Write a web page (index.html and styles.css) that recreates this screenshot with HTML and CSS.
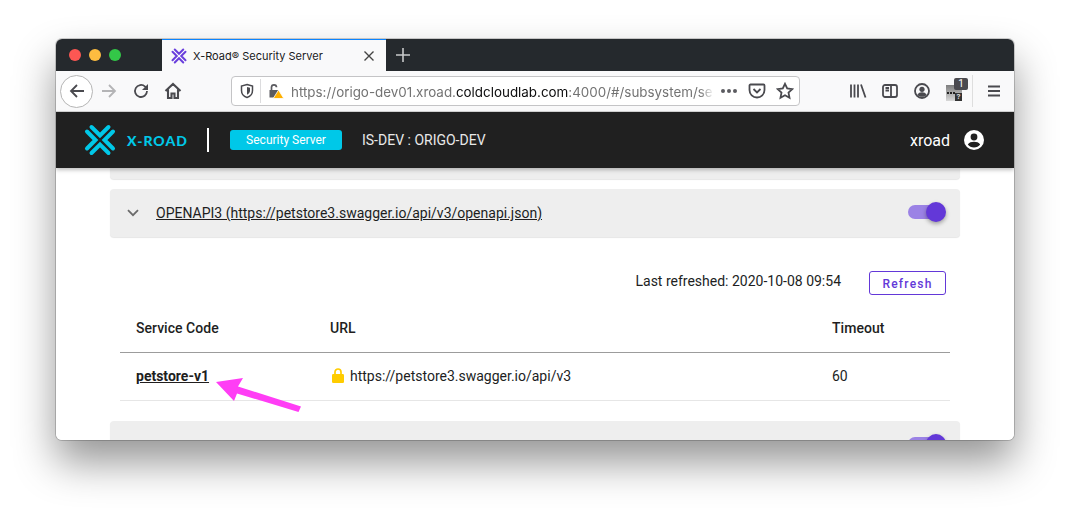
FILE: index.html
```html
<!DOCTYPE html>
<html lang="en">
<head>
<meta charset="utf-8">
<title>X-Road Security Server</title>
<link rel="stylesheet" href="styles.css">
</head>
<body>
<div class="window">
  <div class="titlebar">
    <div class="lights"><span class="light red"></span><span class="light amber"></span><span class="light green"></span></div>
    <div class="tab">
      <svg class="favicon" viewBox="0 0 32 32"><use href="#xlogo"/></svg>
      <span class="tab-title">X-Road® Security Server</span>
      <svg class="tab-close" viewBox="0 0 12 12"><path d="M1.5 1.5l9 9M10.5 1.5l-9 9"/></svg>
    </div>
    <svg class="newtab" viewBox="0 0 16 16"><path d="M8 1v14M1 8h14"/></svg>
  </div>

  <div class="toolbar">
    <div class="back"><svg class="ico" viewBox="0 0 18 18"><path d="M16 9H3M9 3L3 9l6 6"/></svg></div>
    <div class="cell"><svg class="ico faded" viewBox="0 0 18 18"><path d="M2 9h13M9 3l6 6-6 6"/></svg></div>
    <div class="cell"><svg class="ico" viewBox="0 0 18 18"><path d="M15 9a6 6 0 1 1-1.9-4.4L15 6.400"/><path class="solid" d="M16 2v6h-6z"/></svg></div>
    <div class="cell"><svg class="ico heavy" viewBox="0 0 18 18"><path d="M1.500 9L9 2l7.500 7M4 7.500V16h3.500v-4.500h3V16H14V7.500"/></svg></div>
    <div class="urlbar">
      <svg class="ico shield" viewBox="0 0 16 16"><path d="M8 1.500l5.500 1.500v4.500c0 3.500-2.500 6-5.500 7-3-1-5.500-3.500-5.500-7V3z"/><path class="solid" d="M8 4l3 .8v2.700c0 2-1.300 3.500-3 4.200z"/></svg>
      <span class="url-sep"></span>
      <svg class="lock-warn" viewBox="0 0 16 16"><path class="lw-body" d="M1.500 7h9v7.500h-9z"/><path class="lw-shackle" d="M3.500 7V4.300a2.500 2.500 0 0 1 5 0"/><path class="lw-tri" d="M10.500 7l5.300 8.500H5.200z"/></svg>
      <div class="url"><span class="url-dim">https://origo-dev01.xroad.</span><span class="url-host">coldcloudlab.com</span><span class="url-dim">:4000/#/subsystem/se</span></div>
      <span class="dots"><i></i><i></i><i></i></span>
      <svg class="ico pocket" viewBox="0 0 18 18"><path d="M2.500 2.500h13a1 1 0 0 1 1 1V8a7.500 7.500 0 0 1-15 0V3.500a1 1 0 0 1 1-1z"/><path d="M5.500 7L9 10.500 12.500 7"/></svg>
      <svg class="ico star" viewBox="0 0 18 18"><path d="M9 1.800l2.200 4.700 5.100.6-3.800 3.500 1 5.100L9 13.200l-4.500 2.500 1-5.100L1.700 7.100l5.100-.6z"/></svg>
    </div>
    <div class="cell cell-first"><svg class="ico" viewBox="0 0 18 18"><path d="M2 2.500v13M5.500 2.500v13M9 2.500v13M12 2.500l4.500 13"/></svg></div>
    <div class="cell"><svg class="ico" viewBox="0 0 18 18"><rect x="2" y="3" width="14" height="12" rx="2"/><path d="M10 3v12M4.500 6H8M4.500 8.500H8"/></svg></div>
    <div class="cell"><svg class="ico" viewBox="0 0 18 18"><circle cx="9" cy="9" r="7"/><circle class="solid" cx="9" cy="7.300" r="2.600"/><path class="solid" d="M4.300 13c1-2 2.700-2.700 4.700-2.700s3.700.7 4.700 2.700c-1.300 1.200-2.900 1.800-4.700 1.800s-3.400-.6-4.700-1.800z"/></svg></div>
    <div class="cell"><div class="ext"><span class="ext-tile"><i></i><i></i><i></i></span><span class="ext-q">?</span><span class="ext-badge">1</span></div></div>
    <span class="tool-sep"></span>
    <div class="cell cell-menu"><svg class="ico heavy" viewBox="0 0 18 18"><path d="M3 4.500h12M3 9h12M3 13.500h12"/></svg></div>
  </div>

  <header class="appbar">
    <svg class="logo" viewBox="0 0 32 32"><use href="#xlogo"/></svg>
    <span class="wordmark">X-ROAD</span>
    <span class="divider"></span>
    <span class="chip">Security Server</span>
    <span class="instance">IS-DEV : ORIGO-DEV</span>
    <span class="user">xroad</span>
    <svg class="avatar" viewBox="0 0 20 20"><circle class="av-bg" cx="10" cy="10" r="10"/><circle class="av-fg" cx="10" cy="7" r="3.400"/><path class="av-fg" d="M3.800 14.600C5 12.400 7.500 11.700 10 11.700s5 .7 6.200 2.900C14.800 16.600 12.500 17.500 10 17.500s-4.800-.9-6.200-2.900z"/></svg>
  </header>

  <main class="content">
    <div class="panel-stub"></div>
    <section class="panel">
      <svg class="chevron" viewBox="0 0 12 8"><path d="M1 1.200l5 5 5-5"/></svg>
      <a class="panel-link">OPENAPI3 (https://petstore3.swagger.io/api/v3/openapi.json)</a>
      <span class="toggle"><span class="knob"></span></span>
    </section>
    <div class="refresh-row">
      <span class="refreshed">Last refreshed: 2020-10-08 09:54</span>
      <button class="refresh-btn">Refresh</button>
    </div>
    <div class="table">
      <div class="tr th"><span class="c1">Service Code</span><span class="c2">URL</span><span class="c3">Timeout</span></div>
      <div class="tr td">
        <a class="c1 code">petstore-v1</a>
        <span class="c2 urlcell"><svg class="padlock" viewBox="0 0 12 15"><rect class="pl-body" x="0" y="6" width="12" height="9" rx="1.200"/><path class="pl-shackle" d="M3 7V4a3 3 0 0 1 6 0v3"/></svg>https://petstore3.swagger.io/api/v3</span>
        <span class="c3">60</span>
      </div>
    </div>
    <section class="panel panel-last">
      <span class="toggle"><span class="knob"></span></span>
    </section>
  </main>

  <svg class="pointer" viewBox="0 0 100 40"><path d="M1 1L28-3 23 5.500 86 25.500 83.500 31 22 12.500 19 20z"/></svg>
</div>

<svg class="defs" width="0" height="0">
  <defs>
    <g id="xlogo" fill="none" stroke="currentColor" stroke-width="4" stroke-linecap="round" stroke-linejoin="miter">
      <path d="M7.500 3L16 11.500 24.500 3"/>
      <path d="M7.500 29L16 20.500 24.500 29"/>
      <path d="M3 7.500L11.500 16 3 24.500"/>
      <path d="M29 7.500L20.500 16 29 24.500"/>
    </g>
  </defs>
</svg>
</body>
</html>
```

FILE: styles.css
```css
* { box-sizing: border-box; }
html, body { margin: 0; height: 100%; }
body {
  background: #fff;
  padding: 39px 56px 0;
  font-family: Roboto, "Liberation Sans", sans-serif;
  overflow: hidden;
}
.defs { display: block; }

.window {
  position: relative;
  width: 958px;
  height: 401px;
  border-radius: 6px;
  overflow: hidden;
  background: #fff;
  display: flex;
  flex-direction: column;
}
body::before {
  content: "";
  position: absolute;
  left: 56px;
  top: 39px;
  width: 958px;
  height: 401px;
  border-radius: 6px;
  box-shadow: 0 0 0 1px rgba(0,0,0,.18), 0 22px 42px rgba(0,0,0,.42);
}

/* title bar */
.titlebar {
  height: 32px;
  flex: none;
  background: #25292d;
  display: flex;
  align-items: stretch;
}
.lights { width: 106px; display: flex; align-items: center; gap: 8px; padding-left: 13px; }
.light { width: 12px; height: 12px; border-radius: 50%; }
.red { background: #fc5753; }
.amber { background: #fdbc40; }
.green { background: #33c748; }
.tab {
  width: 224px;
  background: #f9f9fa;
  border-top: 1px solid #0a84ff;
  display: flex;
  align-items: center;
  padding-left: 9px;
}
.favicon { width: 16px; height: 16px; color: #6a3fdc; flex: none; }
.tab-title {
  margin-left: 6px;
  font: 400 11px Inter, "Liberation Sans", sans-serif;
  color: #1a1a1a;
  white-space: nowrap;
  flex: 1;
}
.tab-close { width: 12px; height: 12px; margin-right: 11px; fill: none; stroke: #444; stroke-width: 1.400; }
.newtab { width: 16px; height: 16px; align-self: center; margin-left: 9px; fill: none; stroke: #c8c9ca; stroke-width: 1.600; }

/* toolbar */
.toolbar {
  height: 41px;
  flex: none;
  background: #f9f9fa;
  border-bottom: 1px solid #d4d4d4;
  display: flex;
  align-items: center;
  padding-left: 4px;
}
.ico { width: 18px; height: 18px; fill: none; stroke: #4a4a4f; stroke-width: 1.800; flex: none; }
.ico .solid { fill: #4a4a4f; stroke: none; }
.ico.faded { stroke: #b4b4b6; }
.ico.heavy { stroke-width: 2.100; }
.back {
  width: 33px;
  height: 33px;
  border-radius: 50%;
  border: 1px solid #b5b5b5;
  background: #fff;
  display: flex;
  align-items: center;
  justify-content: center;
  flex: none;
}
.cell { width: 32px; height: 32px; display: flex; align-items: center; justify-content: center; flex: none; }
.cell-first { margin-left: 42px; }
.cell-menu { margin-left: 5px; }
.urlbar {
  width: 569px;
  height: 30px;
  margin-left: 42px;
  background: #fff;
  border: 1px solid #c4c4c6;
  border-radius: 4px;
  display: flex;
  align-items: center;
  padding-left: 7px;
  flex: none;
}
.shield { width: 16px; height: 16px; stroke-width: 1.500; }
.url-sep { width: 1px; height: 24px; background: #dcdcde; margin-left: 5px; }
.lock-warn { width: 16px; height: 16px; margin-left: 7px; flex: none; }
.lw-body { fill: #5b5b60; }
.lw-shackle { fill: none; stroke: #5b5b60; stroke-width: 1.700; }
.lw-tri { fill: #ffb000; stroke: #fff; stroke-width: .8; }
.url {
  margin-left: 7px;
  padding-top: 1px;
  width: 421px;
  white-space: nowrap;
  font: 400 13.4px Inter, "Liberation Sans", sans-serif;
  -webkit-mask-image: linear-gradient(to right, #000 97%, rgba(0,0,0,.15));
  mask-image: linear-gradient(to right, #000 97%, rgba(0,0,0,.15));
}
.url-dim { color: #737373; }
.url-host { color: #0c0c0d; }
.dots { display: flex; gap: 2px; margin-left: 9px; }
.dots i { width: 4px; height: 4px; border-radius: 50%; background: #5b5b60; }
.pocket { margin-left: 11px; }
.star { margin-left: 10px; }
.ext { position: relative; width: 16px; height: 18px; margin-top: 5px; }
.ext-tile {
  display: flex; gap: 1px; align-items: center; padding-left: 1px;
  width: 16px; height: 16px;
  background: linear-gradient(#7e7e7e, #d8d8d8);
}
.ext-tile i { width: 2px; height: 2px; background: #222; }
.ext-q { position: absolute; right: 0; bottom: 2px; width: 7px; height: 8px; background: #333; color: #ddd; font: 700 8px/8px Roboto, sans-serif; text-align: center; }
.ext-badge {
  position: absolute; left: 8px; top: -7px;
  width: 14px; height: 12px;
  background: #4a4a4f; color: #fff;
  border-radius: 2px;
  font: 400 10px/12px Roboto, sans-serif;
  text-align: center;
}
.tool-sep { width: 1px; height: 32px; background: #dedede; margin-left: 2px; flex: none; }

/* app header */
.appbar {
  height: 56px;
  flex: none;
  background: #202020;
  display: flex;
  align-items: center;
  padding-left: 28px;
  padding-right: 30px;
  box-shadow: 0 2px 4px rgba(0,0,0,.25);
  z-index: 1;
}
.logo { width: 32px; height: 32px; color: #00c8e8; flex: none; }
.wordmark { margin-left: 11px; font: 900 14px Lato, "Open Sans", sans-serif; letter-spacing: 1px; color: #00c8e8; width: 80px; white-space: nowrap; }
.divider { width: 2px; height: 24px; background: #fff; flex: none; }
.chip {
  margin-left: 21px;
  width: 112px;
  height: 20px;
  background: #00c8e8;
  border-radius: 3px;
  color: #fff;
  font-size: 12px;
  line-height: 20px;
  text-align: center;
  flex: none;
}
.instance { margin-left: 20px; font-size: 14px; color: #e8e8e8; white-space: nowrap; }
.user { margin-left: auto; font-size: 16px; color: #fff; }
.avatar { width: 20px; height: 20px; margin-left: 14px; flex: none; }
.av-bg { fill: #fff; }
.av-fg { fill: #202020; }

/* content */
.content { flex: 1; min-height: 0; overflow: hidden; padding: 0 54px; color: #211e1e; }
.panel-stub {
  height: 11px;
  background: #eeeeee;
  border-radius: 0 0 4px 4px;
  box-shadow: 0 1px 1px rgba(0,0,0,.1);
}
.panel {
  margin-top: 10px;
  height: 48px;
  background: #eeeeee;
  border-radius: 4px;
  box-shadow: 0 1px 1px rgba(0,0,0,.1);
  display: flex;
  align-items: center;
  padding: 0 14px 0 17px;
}
.chevron { width: 12px; height: 8px; fill: none; stroke: #6b6b6b; stroke-width: 1.800; flex: none; }
.panel-link { margin-left: 17px; font-size: 14px; color: #211e1e; text-decoration: underline; white-space: nowrap; }
.toggle {
  position: relative;
  margin-left: auto;
  width: 32px;
  height: 14px;
  margin-right: 6px;
  margin-top: -2px;
  border-radius: 7px;
  background: #9b82e5;
  flex: none;
}
.knob {
  position: absolute;
  left: 18px;
  top: -3px;
  width: 20px;
  height: 20px;
  border-radius: 50%;
  background: #6338d8;
  box-shadow: 0 2px 4px rgba(0,0,0,.35);
}
.panel-last { margin-top: 20px; }
.refresh-row {
  margin-top: 34px;
  height: 24px;
  display: flex;
  align-items: center;
  justify-content: flex-end;
  padding-right: 14px;
}
.refreshed { font-size: 14px; margin-top: -5px; }
.refresh-btn {
  margin-left: 28px;
  width: 77px;
  height: 24px;
  padding: 1px 0 0;
  background: #fff;
  border: 1px solid #6338d8;
  border-radius: 3px;
  color: #6338d8;
  font: 500 12px Roboto, sans-serif;
  letter-spacing: 1.200px;
}
.table { margin: 10px 10px 0; }
.tr { display: flex; align-items: center; font-size: 14px; padding: 0 0 2px 16px; }
.th { height: 48px; font-weight: 500; letter-spacing: .03px; border-bottom: 1px solid #9c9c9c; }
.td { height: 48px; border-bottom: 1px solid #e6e6e6; }
.c1 { width: 194px; flex: none; }
.c2 { width: 502px; flex: none; }
.c3 { flex: 1; }
.code { font-weight: 700; text-decoration: underline; }
.urlcell { display: flex; align-items: center; }
.padlock { width: 12px; height: 15px; margin: 0 6px 0 2px; flex: none; }
.pl-body { fill: #ffcc00; }
.pl-shackle { fill: none; stroke: #ffcc00; stroke-width: 1.700; }

.pointer {
  position: absolute;
  left: 159px;
  top: 342px;
  width: 100px;
  height: 40px;
  fill: #ff3df5;
  overflow: visible;
}
```
